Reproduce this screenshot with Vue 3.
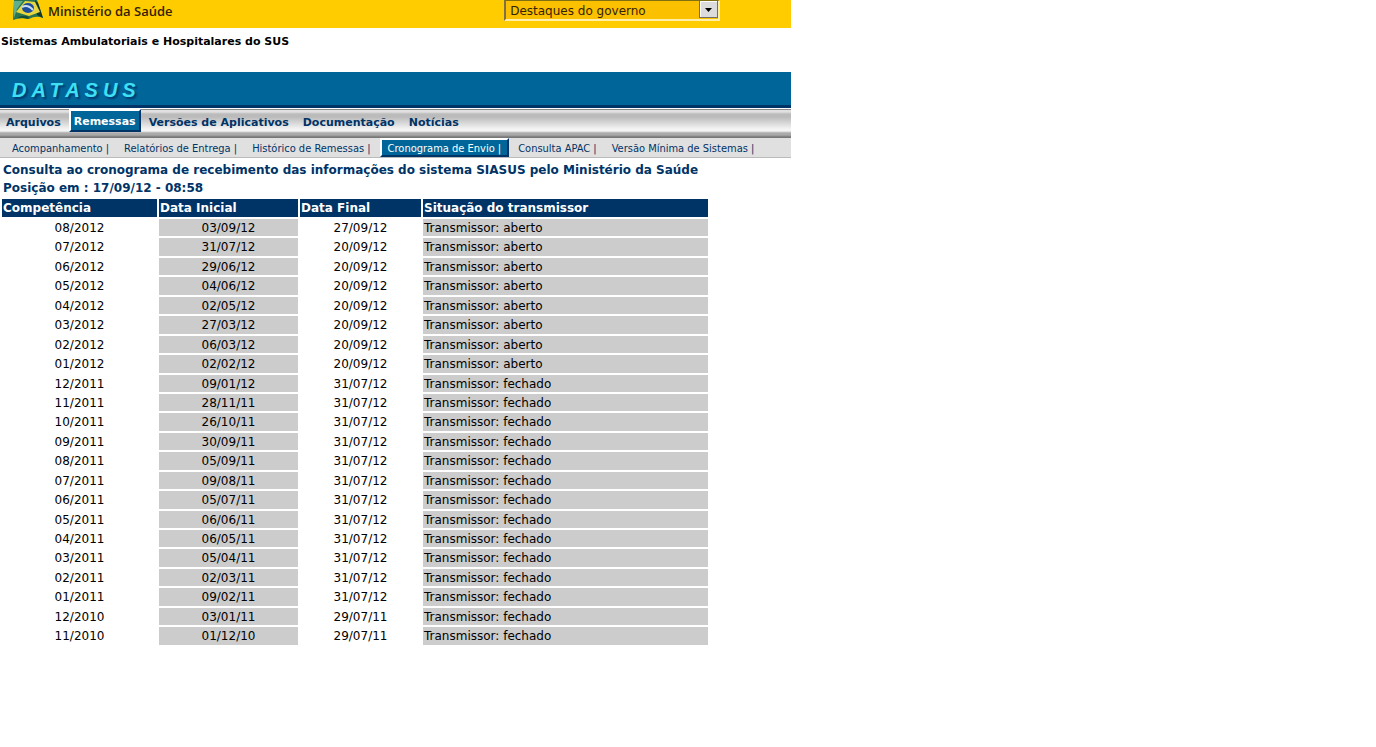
<script setup>
const mainMenu = ['Arquivos', 'Remessas', 'Versões de Aplicativos', 'Documentação', 'Notícias']
const subMenu = [
  'Acompanhamento', 'Relatórios de Entrega', 'Histórico de Remessas',
  'Cronograma de Envio', 'Consulta APAC', 'Versão Mínima de Sistemas',
]
const rows = [
  ['08/2012', '03/09/12', '27/09/12', 'aberto'],
  ['07/2012', '31/07/12', '20/09/12', 'aberto'],
  ['06/2012', '29/06/12', '20/09/12', 'aberto'],
  ['05/2012', '04/06/12', '20/09/12', 'aberto'],
  ['04/2012', '02/05/12', '20/09/12', 'aberto'],
  ['03/2012', '27/03/12', '20/09/12', 'aberto'],
  ['02/2012', '06/03/12', '20/09/12', 'aberto'],
  ['01/2012', '02/02/12', '20/09/12', 'aberto'],
  ['12/2011', '09/01/12', '31/07/12', 'fechado'],
  ['11/2011', '28/11/11', '31/07/12', 'fechado'],
  ['10/2011', '26/10/11', '31/07/12', 'fechado'],
  ['09/2011', '30/09/11', '31/07/12', 'fechado'],
  ['08/2011', '05/09/11', '31/07/12', 'fechado'],
  ['07/2011', '09/08/11', '31/07/12', 'fechado'],
  ['06/2011', '05/07/11', '31/07/12', 'fechado'],
  ['05/2011', '06/06/11', '31/07/12', 'fechado'],
  ['04/2011', '06/05/11', '31/07/12', 'fechado'],
  ['03/2011', '05/04/11', '31/07/12', 'fechado'],
  ['02/2011', '02/03/11', '31/07/12', 'fechado'],
  ['01/2011', '09/02/11', '31/07/12', 'fechado'],
  ['12/2010', '03/01/11', '29/07/11', 'fechado'],
  ['11/2010', '01/12/10', '29/07/11', 'fechado'],
]
</script>

<template>
  <div class="page">
    <header class="gov">
      <svg class="flag" viewBox="0 0 32 21" aria-hidden="true">
        <path d="M2 0 L25 0 Q28 8 31 18 Q24 15 17 19 Q8 17 1 20 Z" fill="#2a7550" />
        <path d="M2 1 L11 1 L5 9 L2 18 Z" fill="#5fae8c" />
        <path d="M23 0 L26 3 L31 18 L25 15 Z" fill="#12382c" />
        <path d="M5 18 Q11 14 17 17 L16 19 Q9 17 5 18 Z" fill="#174c35" />
        <path d="M4 12 L13 1 L23 2 L28 12 L17 16 Z" fill="#e8d640" />
        <ellipse cx="16" cy="8" rx="6" ry="5" fill="#1f4c9a" />
        <path d="M10 7 Q16 4 21 10" fill="none" stroke="#c9def0" stroke-width="2" />
      </svg>
      <span class="ministry">Ministério da Saúde</span>
      <span class="pick">
        <select aria-label="Destaques do governo">
          <option>Destaques do governo</option>
        </select>
        <svg class="arrow" viewBox="0 0 19 17" aria-hidden="true">
          <rect x="0" y="0" width="19" height="17" fill="#716f64" />
          <rect x="1" y="0" width="17" height="16" fill="#fff" />
          <rect x="2" y="1" width="16" height="15" fill="#dcdcdc" />
          <path d="M6 7h7l-3.500 4z" fill="#000" />
        </svg>
      </span>
    </header>
    <p class="system">Sistemas Ambulatoriais e Hospitalares do SUS</p>
    <div class="brand">DATASUS</div>
    <nav class="menu" aria-label="Principal">
      <a v-for="m in mainMenu" :key="m" href="#" :class="{ on: m === 'Remessas' }">{{ m }}</a>
    </nav>
    <nav class="sub" aria-label="Remessas">
      <a v-for="m in subMenu" :key="m" href="#" :class="{ on: m === 'Cronograma de Envio' }">{{ m }} |</a>
    </nav>
    <main>
      <h1>Consulta ao cronograma de recebimento das informações do sistema SIASUS pelo Ministério da Saúde</h1>
      <h2>Posição em : 17/09/12 - 08:58</h2>
      <table>
        <colgroup><col class="c1"><col class="c2"><col class="c3"><col></colgroup>
        <thead>
          <tr>
            <th scope="col">Competência</th>
            <th scope="col">Data Inicial</th>
            <th scope="col">Data Final</th>
            <th scope="col">Situação do transmissor</th>
          </tr>
        </thead>
        <tbody>
          <tr v-for="r in rows" :key="r[0]">
            <td>{{ r[0] }}</td>
            <td class="shade">{{ r[1] }}</td>
            <td>{{ r[2] }}</td>
            <td class="shade state">Transmissor: {{ r[3] }}</td>
          </tr>
        </tbody>
      </table>
    </main>
  </div>
</template>

<style>
body { margin: 0; background: #fff; }
</style>

<style scoped>
.page {
  width: 57.5%;
  min-width: 780px;
  font-family: Verdana, "DejaVu Sans", sans-serif;
  font-size: 12px;
  color: #000;
}
.gov {
  display: flex;
  align-items: flex-start;
  height: 28px;
  background: #fc0;
}
.flag { width: 32px; height: 21px; margin-left: 12px; }
.ministry {
  flex: 1;
  padding-left: 4px;
  font: 600 13px/23px "Open Sans", sans-serif;
  color: #332200;
}
.pick {
  display: flex;
  width: 216px;
  height: 21px;
  box-sizing: border-box;
  margin-right: 71px;
  border: solid;
  border-width: 1px 2px 2px;
  border-color: #80700f #ffefa8 #ffefa8 #80704a;
  background: #fbc000;
}
.pick select {
  appearance: none;
  flex: 1;
  min-width: 0;
  border: 0;
  padding: 1px 0 0 4px;
  background: transparent;
  font: 12px/18px "DejaVu Sans", sans-serif;
  color: #332200;
}
.arrow { width: 19px; height: 17px; }
.system {
  margin: 0;
  height: 44px;
  padding-left: 1px;
  font-size: 11px;
  line-height: 28px;
  font-weight: bold;
}
.brand {
  height: 33px;
  padding-left: 12px;
  border-bottom: 3px solid #036;
  background: #069;
  font: italic bold 20px/37px "Liberation Sans", sans-serif;
  letter-spacing: 5px;
  color: #3fe0f4;
  text-shadow: 2px 2px 2px #003a70;
}
.menu {
  display: flex;
  gap: 2px;
  height: 29px;
  border-top: 1px solid #fff;
  background: linear-gradient(#888 0 1px, #e0e0e0 1px 3px, #bbb 5px 8px, #f4f4f4 20px 22px, #aaa 24px 26px, #777 28px);
}
a { text-decoration: none; color: #036; }
.menu a {
  padding: 0 6px;
  font-size: 11px;
  line-height: 27px;
  font-weight: bold;
}
.menu a.on {
  height: 19px;
  padding: 0 3px;
  border: 2px solid #fff;
  border-right-color: #036;
  border-bottom-color: #036;
  background: #069;
  color: #fff;
  line-height: 21px;
}
.sub {
  display: flex;
  gap: 3px;
  height: 19px;
  padding-left: 6px;
  border-bottom: 1px solid #bbb;
  background: #e0e0e0;
}
.sub a {
  padding: 0 6px;
  font: 11px/21px Tahoma, "DejaVu Sans Condensed", sans-serif;
}
.sub a.on {
  height: 15px;
  border: 2px solid #fff;
  border-right-color: #036;
  border-bottom-color: #036;
  background: #069;
  color: #fff;
  line-height: 17px;
}
h1, h2 {
  margin: 0;
  padding-left: 3px;
  font-size: 12px;
  color: #036;
  white-space: nowrap;
}
h1 { padding-top: 2px; line-height: 20px; }
h2 { line-height: 17px; }
table {
  width: calc(100% - 81px);
  table-layout: fixed;
  border-spacing: 2px;
  line-height: 1.37;
}
.c1 { width: 155px; }
.c2 { width: 139px; }
.c3 { width: 121px; }
th {
  padding: 0 1px;
  background: #036;
  color: #fff;
  line-height: 18px;
  text-align: left;
}
td { padding: 1px 1px 0; text-align: center; }
.shade { background: #ccc; }
.state { text-align: left; }
</style>
